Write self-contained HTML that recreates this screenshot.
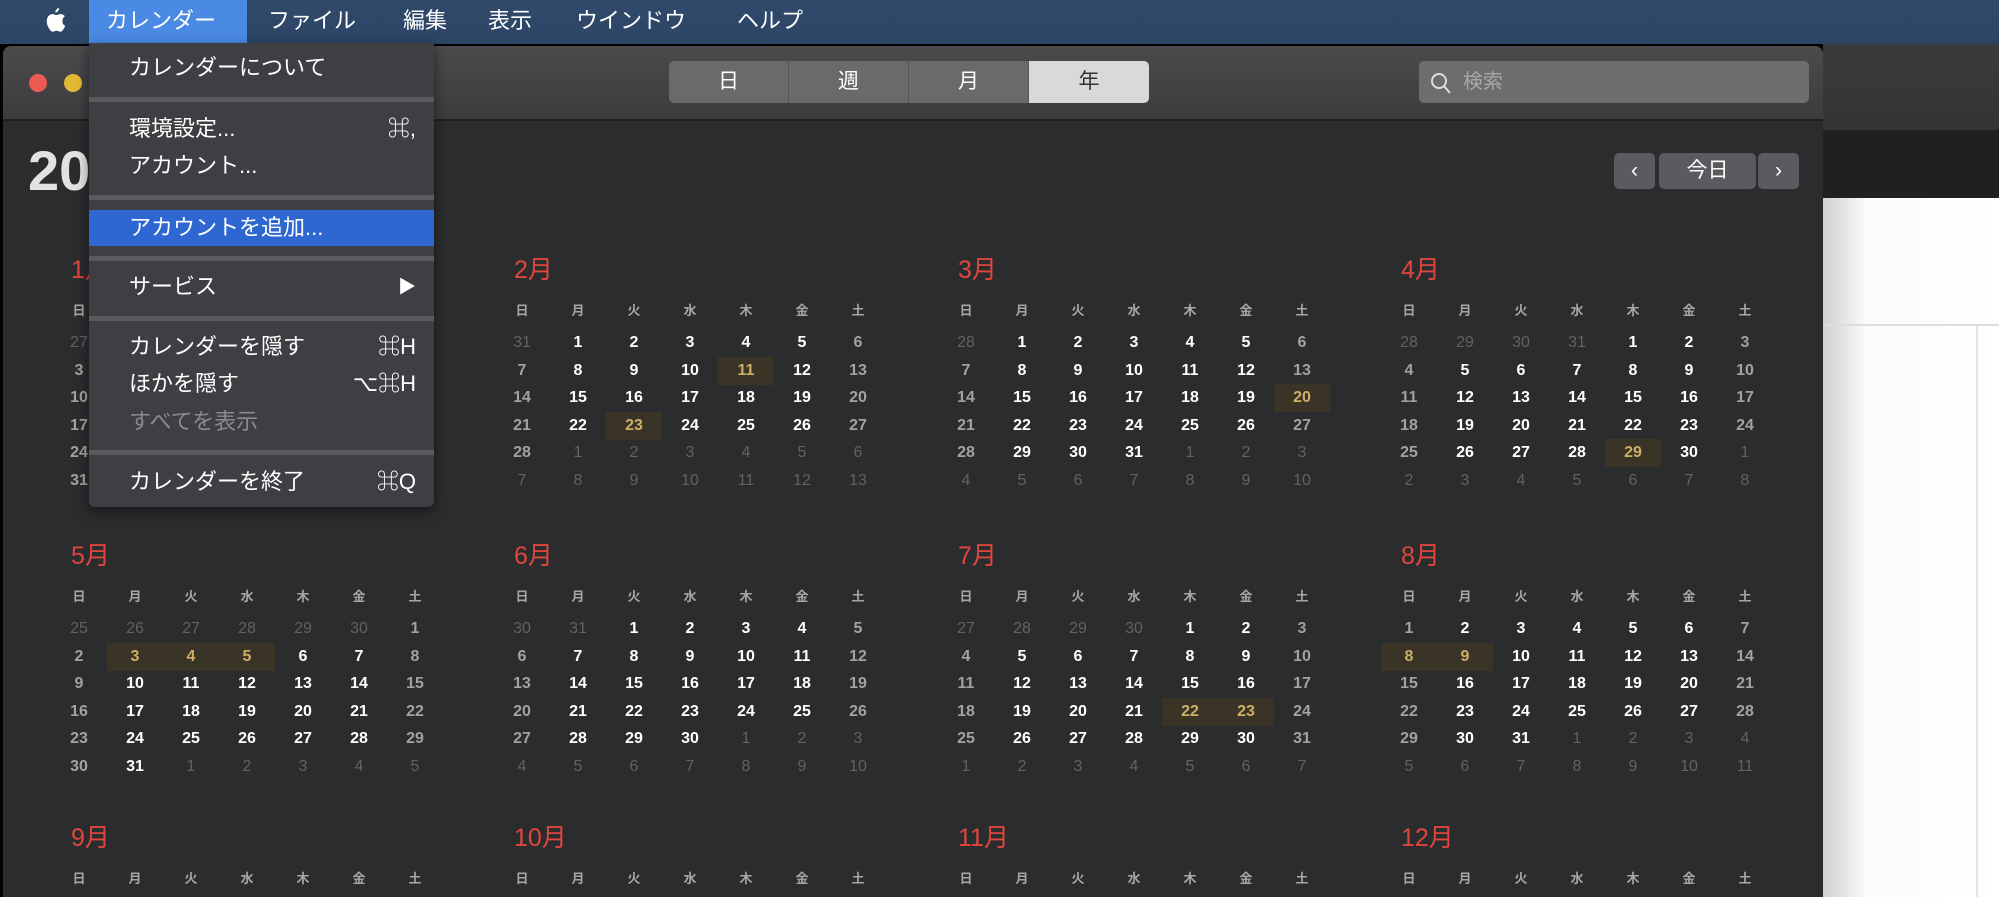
<!DOCTYPE html>
<html><head><meta charset="utf-8"><style>
*{margin:0;padding:0;box-sizing:border-box}
body{width:1999px;height:897px;overflow:hidden;background:#000;font-family:"Liberation Sans","Noto Sans CJK JP",sans-serif;position:relative}
.abs{position:absolute}
#mb{left:0;top:0;width:1999px;height:44px;background:linear-gradient(#31496a,#2c4566);color:#fff;font-size:22px}
#mb span{position:absolute;top:0;line-height:42px}
#win{left:3px;top:46px;width:1820px;height:851px;background:#2b2c2e;border-radius:8px 8px 0 0;overflow:hidden}
#tb{left:0;top:0;width:1820px;height:75px;background:linear-gradient(#4b4b4d,#3c3c3e);border-bottom:2px solid #1f1f20}
.seg{position:absolute;top:15px;height:42px;width:120px;background:#6a6a6c;color:#fff;font-size:21px;text-align:center;line-height:42px;border-right:1px solid #555}
.m{position:absolute;width:400px;height:270px}
.t{position:absolute;left:20px;top:0;font-size:25px;color:#e0463e;line-height:30px}
.r{position:absolute;left:0;height:28px;display:flex}
.r span{width:56px;text-align:center;line-height:28px;font-size:16px;font-weight:bold;color:#fff}
.r span.e{color:#a2a2a2}
.r span.o{color:#626264;font-weight:normal}
.r span.h{background:#393426;color:#cfae66}
.hd span{font-size:13px;color:#a6a6a6;font-weight:bold}
.r1{top:74px}.r2{top:101.6px}.r3{top:129.2px}.r4{top:156.8px}.r5{top:184.4px}.r6{top:212px}
.hd{top:42px}
#menu{left:89px;top:43px;width:345px;height:464px;background:#3e3f42;border-radius:0 0 6px 6px;color:#fff;font-size:22px;box-shadow:0 4px 12px rgba(0,0,0,.5)}
#menu div{position:absolute;left:40px;line-height:30px}
#menu .k{left:auto;right:18px}
#menu .sep{left:0;width:345px;height:5px;background:#5a5b5e}
.nb{position:absolute;top:107px;height:36px;background:#5a5b5e;border-radius:5px;color:#fff;text-align:center;line-height:36px;font-size:21px}
</style></head><body>
<div id="mb" class="abs">
<svg style="position:absolute;left:44px;top:8px" width="22" height="26" viewBox="0 0 22 26"><path d="M15 0c.3 2-1.4 4.3-3.6 4.5-.3-2 1.5-4.2 3.6-4.5zM18.5 13.8c0 3 2.6 4 2.7 4-.1.3-.5 1.6-1.4 3-1 1.4-1.9 2.9-3.5 2.9-1.5 0-2-.9-3.700-.9s-2.3.9-3.7.9c-1.5.1-2.7-1.6-3.7-3C3.2 17.9 1.7 12.6 3.8 9c1-1.8 2.8-2.9 4.8-2.900 1.5 0 2.9 1 3.8 1s2.6-1.2 4.4-1c.7 0 2.8.3 4.1 2.2-.1.1-2.4 1.5-2.4 4.5z" fill="#fff"/></svg>
<span style="left:89px;width:158px;height:44px;background:#4a8ae4;padding-left:17px">カレンダー</span>
<span style="left:268px">ファイル</span>
<span style="left:403px">編集</span>
<span style="left:488px">表示</span>
<span style="left:576px">ウインドウ</span>
<span style="left:737px">ヘルプ</span>
</div>
<div class="abs" style="left:1823px;top:44px;width:176px;height:86px;background:linear-gradient(#3a3b3d,#333436)"></div>
<div class="abs" style="left:1823px;top:130px;width:176px;height:68px;background:#1f2022"></div>
<div class="abs" style="left:1823px;top:198px;width:176px;height:699px;background:linear-gradient(90deg,#d0d0d0,#fbfbfb 25%,#fff)"></div>
<div class="abs" style="left:1823px;top:324px;width:176px;height:2px;background:#ddd"></div>
<div class="abs" style="left:1976px;top:326px;width:2px;height:571px;background:#e4e4e4"></div>
<div id="win" class="abs">
<div id="tb" class="abs">
<div class="abs" style="left:26px;top:28px;width:18px;height:18px;border-radius:50%;background:#ec5b53"></div>
<div class="abs" style="left:61px;top:28px;width:18px;height:18px;border-radius:50%;background:#e0b834"></div>
<div class="seg" style="left:666px;border-radius:5px 0 0 5px">日</div>
<div class="seg" style="left:786px">週</div>
<div class="seg" style="left:906px">月</div>
<div class="seg" style="left:1026px;background:#d9d9d9;color:#333;border-radius:0 5px 5px 0;border:none">年</div>
<div class="abs" style="left:1416px;top:15px;width:390px;height:42px;background:#6d6d6f;border-radius:5px;color:#a8a8a8;font-size:20px;line-height:42px;padding-left:44px">検索
<svg style="position:absolute;left:10px;top:10px" width="24" height="24" viewBox="0 0 24 24"><circle cx="10" cy="10" r="7" fill="none" stroke="#ddd" stroke-width="2"/><path d="M15 15l6 7" stroke="#ddd" stroke-width="2"/></svg></div>
</div>
<div class="abs" style="left:25px;top:90px;font-size:56px;font-weight:bold;color:#e2e2e2;line-height:70px">2021年</div>
<div class="nb" style="left:1611px;width:41px">&lsaquo;</div>
<div class="nb" style="left:1656px;width:97px">今日</div>
<div class="nb" style="left:1755px;width:41px">&rsaquo;</div>
</div>
<div id="cal" class="abs" style="left:0;top:0">
<div class="m" style="left:51px;top:255px"><div class="t">1月</div>
<div class="r hd"><span>日</span><span>月</span><span>火</span><span>水</span><span>木</span><span>金</span><span>土</span></div>
<div class="r r1"><span class="o">27</span><span class="o">28</span><span class="o">29</span><span class="o">30</span><span class="o">31</span><span>1</span><span class="e">2</span></div>
<div class="r r2"><span class="e">3</span><span>4</span><span>5</span><span>6</span><span>7</span><span>8</span><span class="e">9</span></div>
<div class="r r3"><span class="e">10</span><span>11</span><span>12</span><span>13</span><span>14</span><span>15</span><span class="e">16</span></div>
<div class="r r4"><span class="e">17</span><span>18</span><span>19</span><span>20</span><span>21</span><span>22</span><span class="e">23</span></div>
<div class="r r5"><span class="e">24</span><span>25</span><span>26</span><span>27</span><span>28</span><span>29</span><span class="e">30</span></div>
<div class="r r6"><span class="e">31</span><span class="o">1</span><span class="o">2</span><span class="o">3</span><span class="o">4</span><span class="o">5</span><span class="o">6</span></div></div>
<div class="m" style="left:494px;top:255px"><div class="t">2月</div>
<div class="r hd"><span>日</span><span>月</span><span>火</span><span>水</span><span>木</span><span>金</span><span>土</span></div>
<div class="r r1"><span class="o">31</span><span>1</span><span>2</span><span>3</span><span>4</span><span>5</span><span class="e">6</span></div>
<div class="r r2"><span class="e">7</span><span>8</span><span>9</span><span>10</span><span class="h">11</span><span>12</span><span class="e">13</span></div>
<div class="r r3"><span class="e">14</span><span>15</span><span>16</span><span>17</span><span>18</span><span>19</span><span class="e">20</span></div>
<div class="r r4"><span class="e">21</span><span>22</span><span class="h">23</span><span>24</span><span>25</span><span>26</span><span class="e">27</span></div>
<div class="r r5"><span class="e">28</span><span class="o">1</span><span class="o">2</span><span class="o">3</span><span class="o">4</span><span class="o">5</span><span class="o">6</span></div>
<div class="r r6"><span class="o">7</span><span class="o">8</span><span class="o">9</span><span class="o">10</span><span class="o">11</span><span class="o">12</span><span class="o">13</span></div></div>
<div class="m" style="left:938px;top:255px"><div class="t">3月</div>
<div class="r hd"><span>日</span><span>月</span><span>火</span><span>水</span><span>木</span><span>金</span><span>土</span></div>
<div class="r r1"><span class="o">28</span><span>1</span><span>2</span><span>3</span><span>4</span><span>5</span><span class="e">6</span></div>
<div class="r r2"><span class="e">7</span><span>8</span><span>9</span><span>10</span><span>11</span><span>12</span><span class="e">13</span></div>
<div class="r r3"><span class="e">14</span><span>15</span><span>16</span><span>17</span><span>18</span><span>19</span><span class="h">20</span></div>
<div class="r r4"><span class="e">21</span><span>22</span><span>23</span><span>24</span><span>25</span><span>26</span><span class="e">27</span></div>
<div class="r r5"><span class="e">28</span><span>29</span><span>30</span><span>31</span><span class="o">1</span><span class="o">2</span><span class="o">3</span></div>
<div class="r r6"><span class="o">4</span><span class="o">5</span><span class="o">6</span><span class="o">7</span><span class="o">8</span><span class="o">9</span><span class="o">10</span></div></div>
<div class="m" style="left:1381px;top:255px"><div class="t">4月</div>
<div class="r hd"><span>日</span><span>月</span><span>火</span><span>水</span><span>木</span><span>金</span><span>土</span></div>
<div class="r r1"><span class="o">28</span><span class="o">29</span><span class="o">30</span><span class="o">31</span><span>1</span><span>2</span><span class="e">3</span></div>
<div class="r r2"><span class="e">4</span><span>5</span><span>6</span><span>7</span><span>8</span><span>9</span><span class="e">10</span></div>
<div class="r r3"><span class="e">11</span><span>12</span><span>13</span><span>14</span><span>15</span><span>16</span><span class="e">17</span></div>
<div class="r r4"><span class="e">18</span><span>19</span><span>20</span><span>21</span><span>22</span><span>23</span><span class="e">24</span></div>
<div class="r r5"><span class="e">25</span><span>26</span><span>27</span><span>28</span><span class="h">29</span><span>30</span><span class="o">1</span></div>
<div class="r r6"><span class="o">2</span><span class="o">3</span><span class="o">4</span><span class="o">5</span><span class="o">6</span><span class="o">7</span><span class="o">8</span></div></div>
<div class="m" style="left:51px;top:541px"><div class="t">5月</div>
<div class="r hd"><span>日</span><span>月</span><span>火</span><span>水</span><span>木</span><span>金</span><span>土</span></div>
<div class="r r1"><span class="o">25</span><span class="o">26</span><span class="o">27</span><span class="o">28</span><span class="o">29</span><span class="o">30</span><span class="e">1</span></div>
<div class="r r2"><span class="e">2</span><span class="h">3</span><span class="h">4</span><span class="h">5</span><span>6</span><span>7</span><span class="e">8</span></div>
<div class="r r3"><span class="e">9</span><span>10</span><span>11</span><span>12</span><span>13</span><span>14</span><span class="e">15</span></div>
<div class="r r4"><span class="e">16</span><span>17</span><span>18</span><span>19</span><span>20</span><span>21</span><span class="e">22</span></div>
<div class="r r5"><span class="e">23</span><span>24</span><span>25</span><span>26</span><span>27</span><span>28</span><span class="e">29</span></div>
<div class="r r6"><span class="e">30</span><span>31</span><span class="o">1</span><span class="o">2</span><span class="o">3</span><span class="o">4</span><span class="o">5</span></div></div>
<div class="m" style="left:494px;top:541px"><div class="t">6月</div>
<div class="r hd"><span>日</span><span>月</span><span>火</span><span>水</span><span>木</span><span>金</span><span>土</span></div>
<div class="r r1"><span class="o">30</span><span class="o">31</span><span>1</span><span>2</span><span>3</span><span>4</span><span class="e">5</span></div>
<div class="r r2"><span class="e">6</span><span>7</span><span>8</span><span>9</span><span>10</span><span>11</span><span class="e">12</span></div>
<div class="r r3"><span class="e">13</span><span>14</span><span>15</span><span>16</span><span>17</span><span>18</span><span class="e">19</span></div>
<div class="r r4"><span class="e">20</span><span>21</span><span>22</span><span>23</span><span>24</span><span>25</span><span class="e">26</span></div>
<div class="r r5"><span class="e">27</span><span>28</span><span>29</span><span>30</span><span class="o">1</span><span class="o">2</span><span class="o">3</span></div>
<div class="r r6"><span class="o">4</span><span class="o">5</span><span class="o">6</span><span class="o">7</span><span class="o">8</span><span class="o">9</span><span class="o">10</span></div></div>
<div class="m" style="left:938px;top:541px"><div class="t">7月</div>
<div class="r hd"><span>日</span><span>月</span><span>火</span><span>水</span><span>木</span><span>金</span><span>土</span></div>
<div class="r r1"><span class="o">27</span><span class="o">28</span><span class="o">29</span><span class="o">30</span><span>1</span><span>2</span><span class="e">3</span></div>
<div class="r r2"><span class="e">4</span><span>5</span><span>6</span><span>7</span><span>8</span><span>9</span><span class="e">10</span></div>
<div class="r r3"><span class="e">11</span><span>12</span><span>13</span><span>14</span><span>15</span><span>16</span><span class="e">17</span></div>
<div class="r r4"><span class="e">18</span><span>19</span><span>20</span><span>21</span><span class="h">22</span><span class="h">23</span><span class="e">24</span></div>
<div class="r r5"><span class="e">25</span><span>26</span><span>27</span><span>28</span><span>29</span><span>30</span><span class="e">31</span></div>
<div class="r r6"><span class="o">1</span><span class="o">2</span><span class="o">3</span><span class="o">4</span><span class="o">5</span><span class="o">6</span><span class="o">7</span></div></div>
<div class="m" style="left:1381px;top:541px"><div class="t">8月</div>
<div class="r hd"><span>日</span><span>月</span><span>火</span><span>水</span><span>木</span><span>金</span><span>土</span></div>
<div class="r r1"><span class="e">1</span><span>2</span><span>3</span><span>4</span><span>5</span><span>6</span><span class="e">7</span></div>
<div class="r r2"><span class="h">8</span><span class="h">9</span><span>10</span><span>11</span><span>12</span><span>13</span><span class="e">14</span></div>
<div class="r r3"><span class="e">15</span><span>16</span><span>17</span><span>18</span><span>19</span><span>20</span><span class="e">21</span></div>
<div class="r r4"><span class="e">22</span><span>23</span><span>24</span><span>25</span><span>26</span><span>27</span><span class="e">28</span></div>
<div class="r r5"><span class="e">29</span><span>30</span><span>31</span><span class="o">1</span><span class="o">2</span><span class="o">3</span><span class="o">4</span></div>
<div class="r r6"><span class="o">5</span><span class="o">6</span><span class="o">7</span><span class="o">8</span><span class="o">9</span><span class="o">10</span><span class="o">11</span></div></div>
<div class="m" style="left:51px;top:823px;height:74px;overflow:hidden"><div class="t">9月</div>
<div class="r hd"><span>日</span><span>月</span><span>火</span><span>水</span><span>木</span><span>金</span><span>土</span></div></div>
<div class="m" style="left:494px;top:823px;height:74px;overflow:hidden"><div class="t">10月</div>
<div class="r hd"><span>日</span><span>月</span><span>火</span><span>水</span><span>木</span><span>金</span><span>土</span></div></div>
<div class="m" style="left:938px;top:823px;height:74px;overflow:hidden"><div class="t">11月</div>
<div class="r hd"><span>日</span><span>月</span><span>火</span><span>水</span><span>木</span><span>金</span><span>土</span></div></div>
<div class="m" style="left:1381px;top:823px;height:74px;overflow:hidden"><div class="t">12月</div>
<div class="r hd"><span>日</span><span>月</span><span>火</span><span>水</span><span>木</span><span>金</span><span>土</span></div></div>
</div>
<div id="menu" class="abs">
<div style="top:10px">カレンダーについて</div>
<div class="sep" style="top:54px"></div>
<div style="top:71px">環境設定...</div><div class="k" style="top:71px">⌘,</div>
<div style="top:108px">アカウント...</div>
<div class="sep" style="top:152px"></div>
<div style="left:0;width:345px;top:167px;height:36px;background:#2e66d2"></div>
<div style="top:170px">アカウントを追加...</div>
<div class="sep" style="top:213px"></div>
<div style="top:229px">サービス</div><div class="k" style="top:229px;font-size:18px">▶</div>
<div class="sep" style="top:273px"></div>
<div style="top:289px">カレンダーを隠す</div><div class="k" style="top:289px">⌘H</div>
<div style="top:326px">ほかを隠す</div><div class="k" style="top:326px">⌥⌘H</div>
<div style="top:364px;color:#8a8a8c">すべてを表示</div>
<div class="sep" style="top:407px"></div>
<div style="top:424px">カレンダーを終了</div><div class="k" style="top:424px">⌘Q</div>
</div>
</body></html>
